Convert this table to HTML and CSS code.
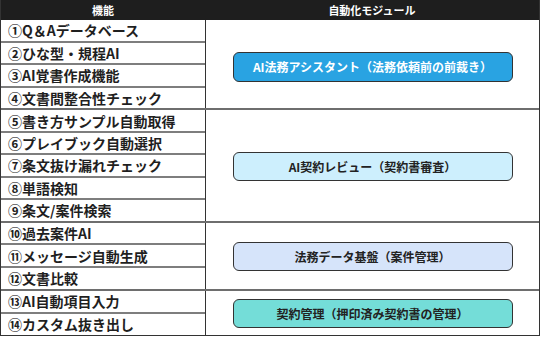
FILE: index.html
```html
<!DOCTYPE html>
<html lang="ja">
<head>
<meta charset="utf-8">
<title>機能と自動化モジュール</title>
<link rel="stylesheet" href="styles.css">
</head>
<body>
<div class="table">
  <div class="head">
    <div class="head-cell feat">機能</div>
    <div class="head-cell mod">自動化モジュール</div>
  </div>

  <div class="group g4">
    <div class="features">
      <div class="row">①Q＆Aデータベース</div>
      <div class="row">②ひな型・規程AI</div>
      <div class="row">③AI覚書作成機能</div>
      <div class="row">④文書間整合性チェック</div>
    </div>
    <div class="module"><span class="pill pill-blue">AI法務アシスタント（法務依頼前の前裁き）</span></div>
  </div>

  <div class="group g5">
    <div class="features">
      <div class="row">⑤書き方サンプル自動取得</div>
      <div class="row">⑥プレイブック自動選択</div>
      <div class="row">⑦条文抜け漏れチェック</div>
      <div class="row">⑧単語検知</div>
      <div class="row">⑨条文/案件検索</div>
    </div>
    <div class="module"><span class="pill pill-cyan">AI契約レビュー（契約書審査）</span></div>
  </div>

  <div class="group g3">
    <div class="features">
      <div class="row">⑩過去案件AI</div>
      <div class="row">⑪メッセージ自動生成</div>
      <div class="row">⑫文書比較</div>
    </div>
    <div class="module"><span class="pill pill-pale">法務データ基盤（案件管理）</span></div>
  </div>

  <div class="group g2">
    <div class="features">
      <div class="row">⑬AI自動項目入力</div>
      <div class="row">⑭カスタム抜き出し</div>
    </div>
    <div class="module"><span class="pill pill-teal">契約管理（押印済み契約書の管理）</span></div>
  </div>
</div>
</body>
</html>
```

FILE: styles.css
```css
* {
  box-sizing: border-box;
}

html, body {
  margin: 0;
  padding: 0;
  background: #ffffff;
}

body {
  width: 540px;
  height: 338px;
  font-family: "Noto Sans CJK JP", "Noto Sans", sans-serif;
  color: #1f1f1f;
}

/* whole table: header bar plus four feature groups sharing the height */
.table {
  display: flex;
  flex-direction: column;
  width: 540px;
  height: 336px;
  border-left: 1px solid #333333;
  border-right: 1px solid #333333;
  border-bottom: 1px solid #333333;
}

.head {
  display: flex;
  flex: 0 0 20px;
  background: #1e1e1e;
  color: #ffffff;
  font-size: 11px;
  font-weight: 700;
  line-height: 20px;
}

.head-cell {
  text-align: center;
}

.head-cell.feat {
  width: 204px;
}

.head-cell.mod {
  flex: 1;
}

.group {
  display: flex;
  min-height: 0;
}

.group + .group {
  border-top: 2px solid #6e6e6e;
}

.g4 { flex: 4 1 0; }
.g5 { flex: 5 1 0; }
.g3 { flex: 3 1 0; }
.g2 { flex: 2 1 0; }

.features {
  display: flex;
  flex-direction: column;
  width: 205px;
  border-right: 1px solid #333333;
}

.row {
  flex: 1 1 0;
  display: flex;
  align-items: center;
  padding-left: 7px;
  font-size: 14px;
  font-weight: 700;
  line-height: 1;
  white-space: nowrap;
  border-bottom: 2px solid #7e7e7e;
}

.row:last-child {
  border-bottom: 0;
}

.module {
  flex: 1;
  display: flex;
  align-items: center;
  justify-content: center;
  padding-top: 2px;
}

.g4 .module {
  padding-top: 5px;
}

.pill {
  display: flex;
  align-items: center;
  justify-content: center;
  width: 280px;
  height: 29px;
  border: 1px solid #333333;
  border-radius: 6px;
  font-size: 12px;
  font-weight: 700;
  color: #222222;
}

.pill-blue {
  height: 30px;
  background: #29a3e2;
  color: #ffffff;
}

.pill-cyan {
  background: #cdeffd;
}

.pill-pale {
  background: #d6e4fa;
}

.pill-teal {
  background: #74ddd8;
}
```
